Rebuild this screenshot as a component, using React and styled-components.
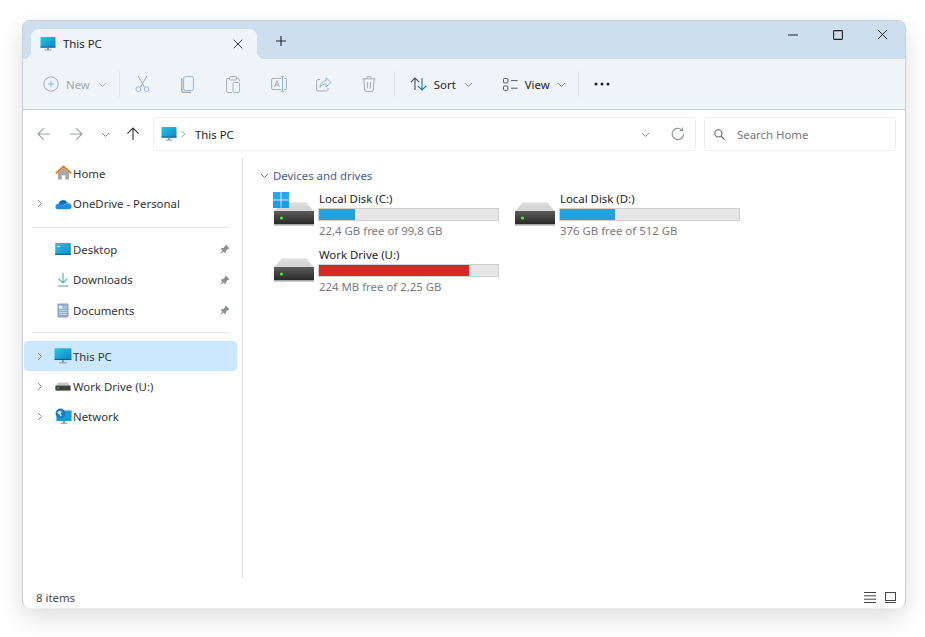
import React, { useId } from "react";
import styled, { createGlobalStyle } from "styled-components";

const GlobalStyle = createGlobalStyle`
  html, body {
    margin: 0;
    padding: 0;
    background: #fff;
    font-family: "Noto Sans", "Open Sans", sans-serif;
  }
  * { box-sizing: border-box; }
`;

const Page = styled.div`
  width: 925px;
  height: 637px;
  padding: 20px 20px 28px 22px;
  overflow: hidden;
`;

const Frame = styled.div`
  width: 884px;
  height: 589px;
  display: flex;
  flex-direction: column;
  border-radius: 8px;
  overflow: hidden;
  background: #fff;
  border: 1px solid #c9ced6;
  border-bottom-color: #eceef1;
  box-shadow: 0 10px 28px rgba(0, 0, 0, 0.07);
`;

const FrameShadow = styled.div`
  border-radius: 8px;
  box-shadow: 0 8px 24px rgba(0, 0, 0, 0.07);
`;

const TitleBar = styled.div`
  flex: 0 0 38px;
  display: flex;
  align-items: flex-end;
  padding-left: 8px;
  background: #cddeee;
`;

const Tab = styled.div`
  position: relative;
  width: 226px;
  height: 30px;
  display: flex;
  align-items: center;
  padding: 0 14px 0 9px;
  background: #eff4f9;
  border-radius: 8px 8px 0 0;
  font-size: 11.4px;
  color: #222;
  &::before,
  &::after {
    content: "";
    position: absolute;
    bottom: 0;
    width: 8px;
    height: 8px;
  }
  &::before {
    left: -8px;
    background: radial-gradient(circle at 0 0, transparent 8px, #eff4f9 8.5px);
  }
  &::after {
    right: -8px;
    background: radial-gradient(circle at 100% 0, transparent 8px, #eff4f9 8.5px);
  }
`;

const TabLabel = styled.span`
  flex: 1;
  margin-left: 7px;
  padding-bottom: 1px;
`;

const NewTab = styled.div`
  margin: 0 0 6px 19px;
  height: 24px;
  display: flex;
  align-items: center;
`;

const WindowButtons = styled.div`
  margin-left: auto;
  align-self: flex-start;
  display: flex;
  height: 27px;
  align-items: center;
`;

const WindowButton = styled.div`
  width: 45px;
  display: flex;
  justify-content: center;
`;

const Toolbar = styled.div`
  flex: 0 0 51px;
  display: flex;
  align-items: center;
  padding-left: 12px;
  background: #eff4f9;
  border-bottom: 1px solid #c9d0d9;
`;

const ToolButton = styled.div`
  display: flex;
  align-items: center;
  gap: 7px;
  padding-left: ${(p) => p.$left || 0}px;
  width: ${(p) => p.$width}px;
  height: 32px;
  font-size: 11.4px;
  color: ${(p) => (p.$disabled ? "#a3a8ad" : "#222")};
`;

const ChevronSlot = styled.span`
  display: flex;
  margin-left: ${(p) => p.$left ?? 5}px;
`;

const IconTool = styled.div`
  width: 45.3px;
  display: flex;
  justify-content: center;
`;

const ToolSep = styled.div`
  width: 1px;
  height: 26px;
  margin: ${(p) => p.$margin || "0"};
  background: #dfe4ea;
`;

const AddressRow = styled.div`
  flex: 0 0 48px;
  display: flex;
  align-items: center;
  padding: 0 9px 0 0;
`;

const NavButton = styled.div`
  width: ${(p) => p.$width}px;
  display: flex;
  justify-content: center;
`;

const AddressBox = styled.div`
  width: 543px;
  height: 34px;
  margin-left: 10px;
  display: flex;
  align-items: center;
  padding: 0 10px 0 7px;
  border: 1px solid #eceef0;
  border-radius: 3px;
  font-size: 11.4px;
  color: #222;
`;

const Crumb = styled.span`
  flex: 1;
  margin-left: 8px;
`;

const AddressEnd = styled.span`
  display: flex;
  align-items: center;
  gap: 21px;
`;

const SearchBox = styled.div`
  width: 192px;
  height: 34px;
  margin-left: 8px;
  display: flex;
  align-items: center;
  gap: 12px;
  padding-left: 9px;
  border: 1px solid #eceef0;
  border-radius: 3px;
  font-size: 11.4px;
  color: #777;
`;

const Body = styled.div`
  flex: 1;
  display: flex;
  min-height: 0;
`;

const Sidebar = styled.nav`
  width: 220px;
  padding: 0 5px 0 1px;
  border-right: 1px solid #dcdfe3;
`;

const NavRow = styled.div`
  height: 30.4px;
  display: flex;
  align-items: center;
  padding: 0 7px 0 11px;
  border-radius: 4px;
  font-size: 11.4px;
  color: #333;
  background: ${(p) => (p.$active ? "#cce8ff" : "transparent")};
`;

const Expander = styled.span`
  width: 9px;
  display: flex;
  margin-right: 10px;
`;

const NavIcon = styled.span`
  width: 18px;
  height: 18px;
  margin-right: 1px;
  display: flex;
  align-items: center;
  justify-content: center;
`;

const NavLabel = styled.span`
  flex: 1;
`;

const NavDivider = styled.div`
  height: 1px;
  margin: ${(p) => p.$margin};
  margin-left: 8px;
  margin-right: 7px;
  background: #e7e7e7;
`;

const Main = styled.main`
  flex: 1;
  padding: 9px 0 0 17px;
`;

const GroupHeader = styled.div`
  display: flex;
  align-items: center;
  gap: 4px;
  height: 16px;
  font-size: 11.4px;
  color: #3f5a98;
`;

const DriveGrid = styled.div`
  display: grid;
  grid-template-columns: 241px 241px;
  grid-auto-rows: 56px;
  margin: 9px 0 0 13px;
`;

const DriveTile = styled.div`
  display: flex;
  gap: 3px;
`;

const DriveArt = styled.div`
  position: relative;
  width: 42px;
  padding-top: 10px;
`;

const WinBadge = styled.span`
  position: absolute;
  left: 0;
  top: 0;
  display: flex;
`;

const DriveInfo = styled.div`
  width: 181px;
  margin-top: -1px;
  font-size: 11.4px;
  line-height: 16px;
  color: #222;
`;

const DriveName = styled.div`
  padding-left: 1px;
`;

const BarTrack = styled.div`
  height: 13px;
  margin: 1px 0 2px;
  background: #e6e6e6;
  border: 1px solid #d0d0d0;
`;

const BarFill = styled.div`
  height: 100%;
  background: ${(p) => p.$color};
`;

const DriveSub = styled.div`
  padding-left: 1px;
  color: #7a7a7a;
`;

const StatusBar = styled.footer`
  flex: 0 0 30px;
  display: flex;
  align-items: center;
  justify-content: space-between;
  padding: 9px 9px 0 13px;
  font-size: 11.4px;
  color: #444;
`;

const ViewToggles = styled.div`
  display: flex;
  align-items: center;
  gap: 9px;
`;

const Chevron = ({ dir = "down", size = 9, color = "#8a8f94" }) => {
  const d = {
    down: "M1 3l3.5 3.5L8 3",
    right: "M3 1l3.5 3.5L3 8",
  }[dir];
  return (
    <svg width={size} height={size} viewBox="0 0 9 9" fill="none" stroke={color} strokeWidth="1">
      <path d={d} />
    </svg>
  );
};

const Monitor = ({ size = 16 }) => {
  const id = useId();
  return (
    <svg width={size} height={size} viewBox="0 0 16 16">
      <defs>
        <linearGradient id={id} x1="0" y1="0" x2="1" y2="1">
          <stop offset="0" stopColor="#2bc9dc" />
          <stop offset="1" stopColor="#0f7fd0" />
        </linearGradient>
      </defs>
      <rect x="0.5" y="1" width="15" height="10.5" rx="0.6" fill={`url(#${id})`} />
      <rect x="0.5" y="10.6" width="15" height="1" fill="#0a5c8f" />
      <rect x="7" y="11.6" width="2" height="2.2" fill="#8b9aa6" />
      <rect x="4.6" y="13.6" width="6.8" height="1" fill="#8b9aa6" />
    </svg>
  );
};

const PinIcon = () => (
  <svg width="10" height="10" viewBox="0 0 10 10" fill="#8b9096">
    <path d="M5.8.6l3.6 3.6-.7.7-.6-.2L6 6.7l-.2 1.8-.7.7L.8 4.9l.7-.7 1.8-.2 2-2-.2-.6z" />
    <path d="M2.3 6.4l1.3 1.3L.7 9.6l-.3-.3z" />
  </svg>
);

const DriveIcon = () => {
  const id = useId();
  return (
    <svg width="42" height="24" viewBox="0 0 42 24">
      <defs>
        <linearGradient id={id} x1="0" y1="0" x2="0" y2="1">
          <stop offset="0" stopColor="#5c5c5c" />
          <stop offset="1" stopColor="#242424" />
        </linearGradient>
      </defs>
      <path d="M8.5 0.5h25L41 9.5H1z" fill="#dcdcdc" />
      <path d="M6 4h30l5 5.5H1z" fill="#cfcfcf" opacity="0.5" />
      <rect x="1" y="9" width="40" height="14" fill={`url(#${id})`} />
      <rect x="1" y="22" width="40" height="1.6" fill="#a9a9a9" />
      <circle cx="8.5" cy="16" r="1.6" fill="#3cf03c" />
    </svg>
  );
};

const WinLogo = () => (
  <svg width="16" height="16" viewBox="0 0 16 16" fill="#1d9ce6">
    <rect x="0" y="0" width="7.6" height="7.6" fill="#27a7ea" />
    <rect x="8.4" y="0" width="7.6" height="7.6" fill="#27a7ea" />
    <rect x="0" y="8.4" width="7.6" height="7.6" />
    <rect x="8.4" y="8.4" width="7.6" height="7.6" />
  </svg>
);

const HomeIcon = () => (
  <svg width="17" height="16" viewBox="0 0 17 16">
    <path d="M3 7.5L8.5 3 14 7.5V14.5H10.3V10.2H6.7V14.5H3z" fill="#a7a7a7" />
    <path d="M.8 8.4L8.5 1.6l7.7 6.8" fill="none" stroke="#e8751a" strokeWidth="1.9" />
  </svg>
);

const CloudIcon = () => (
  <svg width="17" height="12" viewBox="0 0 17 12">
    <path d="M3.5 6.2a4.6 4.6 0 0 1 8.6-1.7 3.4 3.4 0 0 1 1 .3L6 8z" fill="#0f6cc4" />
    <path d="M3.4 5.8C1.6 6 .4 7.3.4 8.7c0 1.4 1 2.6 2.6 2.6h10.8c1.6 0 2.8-1.2 2.8-2.8 0-1.9-1.6-3.4-3.6-3.3-1.8 0-3 1.1-4 2.1-1.6-1-3.6-2-5.6-1.5z" fill="#1f8fe6" />
  </svg>
);

const DesktopIcon = () => {
  const id = useId();
  return (
    <svg width="16" height="14" viewBox="0 0 16 14">
      <defs>
        <linearGradient id={id} x1="0" y1="0" x2="1" y2="1">
          <stop offset="0" stopColor="#2fc3d8" />
          <stop offset="1" stopColor="#1288ce" />
        </linearGradient>
      </defs>
      <rect x="0.2" y="1" width="15.6" height="12" rx="0.6" fill={`url(#${id})`} />
      <rect x="0.2" y="11.6" width="15.6" height="1.4" fill="#0c6fa8" />
      <rect x="2" y="4" width="3" height="1" fill="#bfeef5" />
    </svg>
  );
};

const DownloadIcon = () => (
  <svg width="14" height="15" viewBox="0 0 14 15" fill="none" stroke="#4cb3a0" strokeWidth="1.1">
    <path d="M7 .8v10M2.6 6.6L7 11l4.4-4.4" />
    <path d="M1.6 14h10.8" stroke="#6a9fb5" />
  </svg>
);

const DocumentIcon = () => (
  <svg width="12" height="15" viewBox="0 0 12 15">
    <rect x="0.5" y="0.5" width="11" height="14" rx="0.8" fill="#8aa4c4" />
    <rect x="2" y="2.6" width="3.6" height="3.2" fill="#e5edf6" />
    <path d="M6.6 3.2H10M6.6 5.2H10M2 7.6h8M2 9.6h8M2 11.6h8" stroke="#e5edf6" strokeWidth="0.8" />
  </svg>
);

const SmallDriveIcon = () => (
  <svg width="16" height="9" viewBox="0 0 16 9">
    <path d="M3 .5h10L15.6 4H.4z" fill="#c8c8c8" />
    <rect x="0.4" y="3.6" width="15.2" height="5" fill="#3f3f3f" />
    <circle cx="3" cy="6.1" r="0.8" fill="#35dd35" />
  </svg>
);

const NetworkIcon = () => (
  <svg width="17" height="17" viewBox="0 0 17 17">
    <rect x="1.4" y="2.4" width="15.2" height="10.6" rx="0.5" fill="#1b9bd8" />
    <rect x="8" y="13" width="2.2" height="2" fill="#8b9aa6" />
    <rect x="5.6" y="14.8" width="7" height="1" fill="#8b9aa6" />
    <circle cx="5.4" cy="5.4" r="4.8" fill="#2478b5" />
    <path d="M3 3.4l2.4-.9 1.6 1.6-1.4 1.6 1.3 2-1.4.8-1.4-2.2L2 4.8z" fill="#bfe2f3" />
  </svg>
);

const toolStroke = { fill: "none", strokeWidth: 1 };

const NewIcon = () => (
  <svg width="16" height="16" viewBox="0 0 16 16" {...toolStroke} stroke="#a6abb1">
    <circle cx="8" cy="8" r="7.2" />
    <path d="M8 4.8v6.4M4.8 8h6.4" stroke="#8fb6de" />
  </svg>
);

const CutIcon = () => (
  <svg width="15" height="18" viewBox="0 0 15 18" {...toolStroke}>
    <path d="M3 .8l6.4 11.2M12 .8L5.6 12" stroke="#a6abb1" />
    <circle cx="3.4" cy="14.2" r="2.4" stroke="#8fb6de" />
    <circle cx="11.6" cy="14.2" r="2.4" stroke="#8fb6de" />
  </svg>
);

const CopyIcon = () => (
  <svg width="13" height="17" viewBox="0 0 13 17" {...toolStroke}>
    <path d="M.8 2.6v11.6c0 1.2 1 2.2 2.2 2.2h7" stroke="#a6abb1" strokeWidth="1.4" />
    <rect x="2.6" y="0.6" width="9.8" height="14" rx="1.8" stroke="#8fb6de" />
  </svg>
);

const PasteIcon = () => (
  <svg width="14" height="17" viewBox="0 0 14 17" {...toolStroke}>
    <path d="M3.6 2.4H2A1.4 1.4 0 0 0 .6 3.8v11.4c0 .8.6 1.3 1.4 1.3h4M10.4 2.4H12c.8 0 1.4.6 1.4 1.4v1.4" stroke="#a6abb1" />
    <rect x="3.6" y="0.6" width="6.8" height="3.4" rx="1" stroke="#a6abb1" />
    <rect x="7" y="6.4" width="6.6" height="10.2" rx="1.4" stroke="#8fb6de" />
  </svg>
);

const RenameIcon = () => (
  <svg width="16" height="16" viewBox="0 0 16 16" {...toolStroke}>
    <path d="M10 2.4H2A1.4 1.4 0 0 0 .6 3.8v8.4c0 .8.6 1.4 1.4 1.4h8M13 2.4h1c.8 0 1.4.6 1.4 1.4v8.4c0 .8-.6 1.4-1.4 1.4h-1" stroke="#a6abb1" />
    <path d="M3.6 11L6 4.6 8.4 11M4.4 9h3.2" stroke="#a6abb1" />
    <path d="M11.5 1v14M9.8.6h3.4M9.8 15.4h3.4" stroke="#8fb6de" />
  </svg>
);

const ShareIcon = () => (
  <svg width="16" height="15" viewBox="0 0 16 15" {...toolStroke}>
    <path d="M4 2.6H2A1.4 1.4 0 0 0 .6 4v8.6c0 .8.6 1.4 1.4 1.4h8.6c.8 0 1.4-.6 1.4-1.4V11" stroke="#a6abb1" />
    <path d="M10 1l5.2 4.4L10 9.8V7.2C7.4 7 5.4 8 3.8 10.4 4 6.8 6.4 4 10 3.6z" stroke="#8fb6de" />
  </svg>
);

const TrashIcon = () => (
  <svg width="14" height="16" viewBox="0 0 14 16" {...toolStroke} stroke="#a6abb1">
    <path d="M.4 2.8h13.2M4.8 2.8V1.6C4.8 1 5.2.6 5.8.6h2.4c.6 0 1 .4 1 1v1.2" />
    <path d="M1.8 2.8l.9 11.2c0 .8.6 1.4 1.4 1.4h5.8c.8 0 1.4-.6 1.4-1.4l.9-11.2M5.6 6v6.4M8.4 6v6.4" />
  </svg>
);

const SortIcon = () => (
  <svg width="17" height="14" viewBox="0 0 17 14" fill="none" strokeWidth="1.1">
    <path d="M5 13V1M.8 5.2L5 1l4.2 4.2" stroke="#4a4f55" />
    <path d="M12 1v12M7.8 8.8L12 13l4.2-4.2" stroke="#1a70c0" />
  </svg>
);

const ViewIcon = () => (
  <svg width="15" height="13" viewBox="0 0 15 13" fill="none" stroke="#555a60" strokeWidth="1">
    <rect x="0.5" y="0.5" width="4.4" height="4.4" rx="1" />
    <rect x="0.5" y="8" width="4.4" height="4.4" rx="1" />
    <path d="M8 2.6h6.6M8 10.2h6.6" />
  </svg>
);

const DotsIcon = () => (
  <svg width="16" height="4" viewBox="0 0 16 4" fill="#222">
    <circle cx="2" cy="2" r="1.5" />
    <circle cx="8" cy="2" r="1.5" />
    <circle cx="14" cy="2" r="1.5" />
  </svg>
);

const ArrowIcon = ({ rotate = 0, color = "#9a9fa4" }) => (
  <svg
    width="14"
    height="14"
    viewBox="0 0 14 14"
    fill="none"
    stroke={color}
    strokeWidth="1.1"
    style={{ transform: `rotate(${rotate}deg)` }}
  >
    <path d="M13 7H1M6.6 1.4L1 7l5.6 5.6" />
  </svg>
);

const CloseIcon = ({ size = 11 }) => (
  <svg width={size} height={size} viewBox="0 0 11 11" fill="none" stroke="#222" strokeWidth="1">
    <path d="M.8.8l9.4 9.4M10.2.8L.8 10.2" />
  </svg>
);

const PlusIcon = () => (
  <svg width="10" height="10" viewBox="0 0 10 10" fill="none" stroke="#222" strokeWidth="1.1">
    <path d="M5 0v10M0 5h10" />
  </svg>
);

const MinimizeIcon = () => (
  <svg width="10" height="10" viewBox="0 0 10 10" fill="none" stroke="#222" strokeWidth="1.1">
    <path d="M0 5h10" />
  </svg>
);

const MaximizeIcon = () => (
  <svg width="10" height="10" viewBox="0 0 10 10" fill="none" stroke="#222" strokeWidth="1.1">
    <rect x="0.6" y="0.6" width="8.8" height="8.8" rx="0.8" />
  </svg>
);

const RefreshIcon = () => (
  <svg width="14" height="14" viewBox="0 0 14 14" fill="none" stroke="#8a8f94" strokeWidth="1.1">
    <path d="M12.6 7A5.7 5.7 0 1 1 10.6 2.6" />
    <path d="M11.6.4v3h-3" />
  </svg>
);

const SearchIcon = () => (
  <svg width="11" height="11" viewBox="0 0 11 11" fill="none" stroke="#666" strokeWidth="1.1">
    <circle cx="4.4" cy="4.4" r="3.6" />
    <path d="M7 7l3.6 3.6" />
  </svg>
);

const ListIcon = () => (
  <svg width="12" height="11" viewBox="0 0 12 11" fill="none" stroke="#444" strokeWidth="1">
    <path d="M0 .5h12M0 3.8h12M0 7.2h12M0 10.5h12" />
  </svg>
);

const TilesIcon = () => (
  <svg width="11" height="11" viewBox="0 0 11 11" fill="none" stroke="#444" strokeWidth="1">
    <rect x="0.5" y="0.5" width="10" height="8" />
    <path d="M0 10.5h11" />
  </svg>
);

const DRIVES = [
  { name: "Local Disk (C:)", free: "22,4 GB free of 99,8 GB", used: 20, color: "#26a0da", system: true },
  { name: "Local Disk (D:)", free: "376 GB free of 512 GB", used: 30.5, color: "#26a0da" },
  { name: "Work Drive (U:)", free: "224 MB free of 2,25 GB", used: 83.7, color: "#da2626" },
];

const NavItem = ({ icon, label, expandable, pinned, active }) => (
  <NavRow $active={active}>
    <Expander>{expandable && <Chevron dir="right" />}</Expander>
    <NavIcon>{icon}</NavIcon>
    <NavLabel>{label}</NavLabel>
    {pinned && <PinIcon />}
  </NavRow>
);

export default function App() {
  return (
    <Page>
      <GlobalStyle />
      <FrameShadow>
        <Frame>
          <TitleBar>
            <Tab>
              <Monitor />
              <TabLabel>This PC</TabLabel>
              <CloseIcon size={10} />
            </Tab>
            <NewTab>
              <PlusIcon />
            </NewTab>
            <WindowButtons>
              <WindowButton><MinimizeIcon /></WindowButton>
              <WindowButton><MaximizeIcon /></WindowButton>
              <WindowButton><CloseIcon /></WindowButton>
            </WindowButtons>
          </TitleBar>

          <Toolbar>
            <ToolButton $disabled $width={84} $left={8}>
              <NewIcon />
              New
              <ChevronSlot $left={1}><Chevron color="#b0b4b8" /></ChevronSlot>
            </ToolButton>
            <ToolSep />
            <IconTool><CutIcon /></IconTool>
            <IconTool><CopyIcon /></IconTool>
            <IconTool><PasteIcon /></IconTool>
            <IconTool><RenameIcon /></IconTool>
            <IconTool><ShareIcon /></IconTool>
            <IconTool><TrashIcon /></IconTool>
            <ToolSep $margin="0 0 0 2px" />
            <ToolButton $width={93} $left={15}>
              <SortIcon />
              Sort
              <ChevronSlot $left={1}><Chevron /></ChevronSlot>
            </ToolButton>
            <ToolButton $width={90} $left={15}>
              <ViewIcon />
              View
              <ChevronSlot $left={0}><Chevron /></ChevronSlot>
            </ToolButton>
            <ToolSep />
            <NavButton $width={46}><DotsIcon /></NavButton>
          </Toolbar>

          <AddressRow>
            <NavButton $width={41}><ArrowIcon /></NavButton>
            <NavButton $width={24}><ArrowIcon rotate={180} /></NavButton>
            <NavButton $width={35}><Chevron /></NavButton>
            <NavButton $width={20}><ArrowIcon rotate={90} color="#333" /></NavButton>
            <AddressBox>
              <Monitor />
              <ChevronSlot $left={2}><Chevron dir="right" size={8} /></ChevronSlot>
              <Crumb>This PC</Crumb>
              <AddressEnd>
                <Chevron />
                <RefreshIcon />
              </AddressEnd>
            </AddressBox>
            <SearchBox>
              <SearchIcon />
              Search Home
            </SearchBox>
          </AddressRow>

          <Body>
            <Sidebar>
              <NavItem icon={<HomeIcon />} label="Home" />
              <NavItem icon={<CloudIcon />} label="OneDrive - Personal" expandable />
              <NavDivider $margin="8px 0 6.3px" />
              <NavItem icon={<DesktopIcon />} label="Desktop" pinned />
              <NavItem icon={<DownloadIcon />} label="Downloads" pinned />
              <NavItem icon={<DocumentIcon />} label="Documents" pinned />
              <NavDivider $margin="7px 0 7.7px" />
              <NavItem icon={<Monitor size={18} />} label="This PC" expandable active />
              <NavItem icon={<SmallDriveIcon />} label="Work Drive (U:)" expandable />
              <NavItem icon={<NetworkIcon />} label="Network" expandable />
            </Sidebar>
            <Main>
              <GroupHeader>
                <Chevron color="#6d7278" />
                Devices and drives
              </GroupHeader>
              <DriveGrid>
                {DRIVES.map((d) => (
                  <DriveTile key={d.name}>
                    <DriveArt>
                      <DriveIcon />
                      {d.system && <WinBadge><WinLogo /></WinBadge>}
                    </DriveArt>
                    <DriveInfo>
                      <DriveName>{d.name}</DriveName>
                      <BarTrack>
                        <BarFill $color={d.color} style={{ width: `${d.used}%` }} />
                      </BarTrack>
                      <DriveSub>{d.free}</DriveSub>
                    </DriveInfo>
                  </DriveTile>
                ))}
              </DriveGrid>
            </Main>
          </Body>

          <StatusBar>
            8 items
            <ViewToggles>
              <ListIcon />
              <TilesIcon />
            </ViewToggles>
          </StatusBar>
        </Frame>
      </FrameShadow>
    </Page>
  );
}
